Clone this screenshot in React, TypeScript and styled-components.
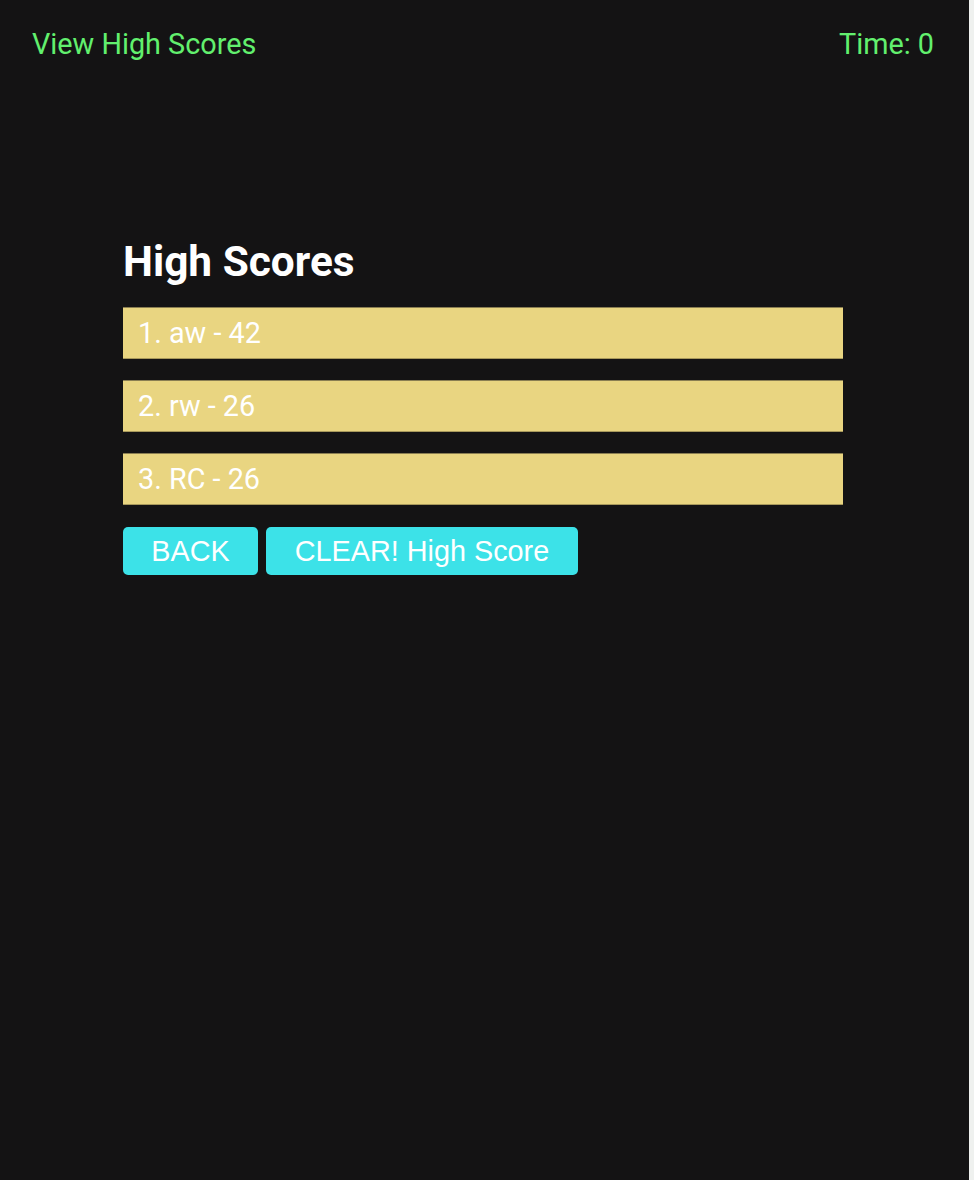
import React from "react";
import styled, { createGlobalStyle } from "styled-components";

const GlobalStyle = createGlobalStyle`
  html, body {
    margin: 0;
    padding: 0;
    background: #eff1ef;
  }
  body {
    font-family: Roboto, "Liberation Sans", sans-serif;
  }
`;

const Page = styled.div`
  width: calc(100% - 5px);
  min-height: 1180px;
  background: #141314;
  display: flex;
  flex-direction: column;
`;

const TopBar = styled.header`
  display: flex;
  justify-content: space-between;
  align-items: center;
  padding: 27px 35px 0 32px;
`;

const TopLink = styled.span`
  font-family: Roboto, sans-serif;
  font-size: 28.8px;
  color: #62f06e;
`;

const Main = styled.main`
  display: flex;
  flex-direction: column;
  gap: 21px;
  width: 720px;
  margin: 176px 0 0 123px;
`;

const Title = styled.h1`
  margin: 0;
  font-family: Roboto, sans-serif;
  font-weight: 700;
  font-size: 42.4px;
  color: #ffffff;
`;

const ScoreRow = styled.div`
  height: 50px;
  display: flex;
  align-items: center;
  padding-left: 15px;
  background: #e9d581;
  border-top: 1px solid #8a7e52;
  border-bottom: 1px solid #a8995c;
  font-family: Roboto, sans-serif;
  font-size: 28.8px;
  color: #ffffff;
`;

const Actions = styled.div`
  display: flex;
  gap: 8px;
  margin-top: 1px;
`;

const Button = styled.button<{ $w: number }>`
  width: ${(p) => p.$w}px;
  height: 48px;
  padding: 0;
  border: none;
  border-radius: 5px;
  background: #3ce2e8;
  color: #ffffff;
  font-family: "Liberation Sans", Arial, sans-serif;
  font-size: 28.8px;
  cursor: pointer;
`;

const scores = [
  { name: "aw", score: 42 },
  { name: "rw", score: 26 },
  { name: "RC", score: 26 },
];

export default function App() {
  return (
    <>
      <GlobalStyle />
      <Page>
        <TopBar>
          <TopLink>View High Scores</TopLink>
          <TopLink>Time: 0</TopLink>
        </TopBar>
        <Main>
          <Title>High Scores</Title>
          {scores.map((s, i) => (
            <ScoreRow key={i}>
              {i + 1}. {s.name} - {s.score}
            </ScoreRow>
          ))}
          <Actions>
            <Button $w={135}>BACK</Button>
            <Button $w={312}>CLEAR! High Score</Button>
          </Actions>
        </Main>
      </Page>
    </>
  );
}
